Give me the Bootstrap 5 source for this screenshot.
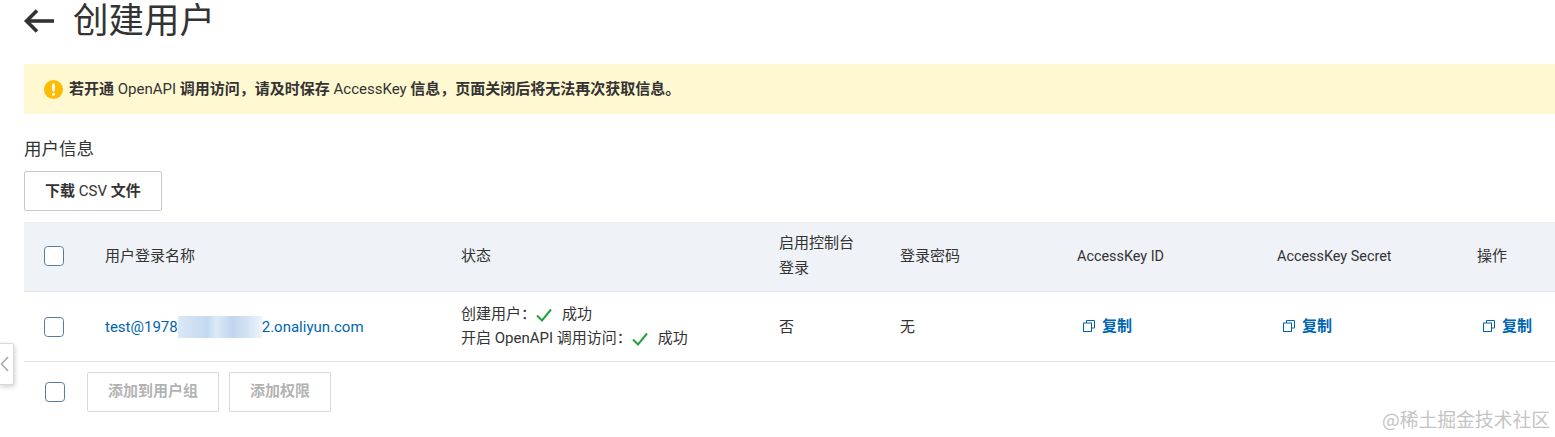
<!DOCTYPE html>
<html lang="zh-CN">
<head>
<meta charset="utf-8">
<title>创建用户</title>
<link href="https://cdn.jsdelivr.net/npm/bootstrap@5.3.0/dist/css/bootstrap.min.css" rel="stylesheet">
<style>
html,body{height:437px;overflow:hidden;background:#fff}
body{font-family:Roboto,"Noto Sans CJK SC",sans-serif;font-size:15px;color:#333;position:relative}
.pg{padding-left:24px}
.ttl-row{height:64px;padding-bottom:22px;gap:19px}
.ttl{font-size:35.5px;font-weight:400;line-height:40px;margin:0;color:#333}
.ttl-row svg{flex:none}
.warn{height:50px;background:#fff8d1;padding:1px 0 0 20px;gap:6px;font-weight:600;font-size:15px;color:#333}
.lat{font-weight:400}
.sect{font-size:17.5px;line-height:24px;margin:23px 0 10px;color:#333;font-weight:400}
.plain-btn{height:40px;border:1px solid #c6c9ce;border-radius:2px;background:#fff;font-size:15px;font-weight:600;color:#333;padding:0 20px;display:inline-flex;align-items:center;white-space:pre}
.plain-btn:hover{background:#fff;border-color:#c6c9ce}
.plain-btn.off,.plain-btn:disabled{color:#b3b3b3;border-color:#d9d9d9;opacity:1;background:#fff}
.tbl{table-layout:fixed;width:1531px;margin:11px 0 0;color:#333;font-size:15px}
.tbl th{background:#eff2f6;font-weight:400;height:69px;padding:0 16px 0 20px;vertical-align:middle;line-height:25px;border-bottom:1px solid #dfe2e6;color:#333}
.tbl td{height:70px;padding:1px 0 0 20px;vertical-align:middle;line-height:24px;border-bottom:1px solid #dfe2e6;color:#333}
.keyname{font-size:14.4px}
.box{width:20px;height:20px;margin:0;border:1px solid #5c7a9a;border-radius:3px;display:block;float:none}
.lnk{color:#0064b4;text-decoration:none}
.blurred{display:inline-block;width:84px;height:22px;vertical-align:-6px;background:linear-gradient(90deg,#dbe8f6 0,#c4d9f1 35%,#dce9f7 45%,#c0d6ef 65%,#d7e5f5 85%,#eef4fb 100%)}
.copy{color:#0064b4;font-weight:600;text-decoration:none;display:inline-flex;align-items:center;gap:7px;margin-left:6px}
.ok{margin:0 10px 0 0;vertical-align:-3px}
.states{margin-top:-2px}
.foot{padding-left:21px;margin-top:10px;gap:10px}
.foot .box{margin-right:12px}
.handle{position:absolute;left:-1px;top:343px;width:15px;height:42px;background:#fff;border:1px solid #d9d9d9;border-radius:0 2px 2px 0;box-shadow:1px 2px 5px rgba(0,0,0,.18);display:flex;align-items:center}
.mark-wm{position:absolute;right:5px;top:406px;font-size:18.8px;line-height:26px;color:#c4c4c4;font-family:"Noto Sans CJK SC",sans-serif}
</style>
</head>
<body>
<div class="pg">
  <div class="ttl-row d-flex align-items-center">
    <svg width="30" height="24" viewBox="0 0 30 24" fill="none" stroke="#333" stroke-width="3.6"><path d="M30 12H3"/><path d="M13 1.5 2.5 12 13 22.5"/></svg>
    <h1 class="ttl">创建用户</h1>
  </div>
  <div class="warn d-flex align-items-center">
    <svg width="19" height="19" viewBox="0 0 19 19"><circle cx="9.5" cy="9.5" r="9.5" fill="#fbbc05"/><rect x="8.2" y="3.5" width="2.6" height="8" rx="1" fill="#fff"/><circle cx="9.5" cy="14.3" r="1.5" fill="#fff"/></svg>
    <span>若开通 <span class="lat">OpenAPI</span> 调用访问，请及时保存 <span class="lat">AccessKey</span> 信息，页面关闭后将无法再次获取信息。</span>
  </div>
  <h2 class="sect">用户信息</h2>
  <button type="button" class="btn plain-btn">下载 <span class="lat">CSV</span> 文件</button>
  <table class="table tbl">
    <colgroup><col style="width:61px"><col style="width:356px"><col style="width:318px"><col style="width:121px"><col style="width:177px"><col style="width:200px"><col style="width:200px"><col style="width:98px"></colgroup>
    <thead>
      <tr>
        <th><input class="form-check-input box" type="checkbox" aria-label="全选"></th>
        <th>用户登录名称</th>
        <th>状态</th>
        <th>启用控制台登录</th>
        <th>登录密码</th>
        <th class="keyname">AccessKey ID</th>
        <th class="keyname">AccessKey Secret</th>
        <th>操作</th>
      </tr>
    </thead>
    <tbody>
      <tr>
        <td><input class="form-check-input box" type="checkbox" aria-label="选择"></td>
        <td><a class="lnk" href="#">test@1978<span class="blurred"></span>2.onaliyun.com</a></td>
        <td>
          <div class="states">
            <div>创建用户：<svg class="ok" width="16" height="14" viewBox="0 0 16 14" fill="none" stroke="#23a33b" stroke-width="2"><path d="M1 7.5 6 12.5 15 1.5"/></svg>成功</div>
            <div>开启 OpenAPI 调用访问：<svg class="ok" width="16" height="14" viewBox="0 0 16 14" fill="none" stroke="#23a33b" stroke-width="2"><path d="M1 7.5 6 12.5 15 1.5"/></svg>成功</div>
          </div>
        </td>
        <td>否</td>
        <td>无</td>
        <td><a class="copy" href="#"><svg width="12" height="12" viewBox="0 0 12 12" fill="none" stroke="#0064b4"><rect x="0.5" y="3" width="8" height="8.5"/><path d="M3.5 3V.5h8V8H8.5"/></svg>复制</a></td>
        <td><a class="copy" href="#"><svg width="12" height="12" viewBox="0 0 12 12" fill="none" stroke="#0064b4"><rect x="0.5" y="3" width="8" height="8.5"/><path d="M3.5 3V.5h8V8H8.5"/></svg>复制</a></td>
        <td><a class="copy" href="#"><svg width="12" height="12" viewBox="0 0 12 12" fill="none" stroke="#0064b4"><rect x="0.5" y="3" width="8" height="8.5"/><path d="M3.5 3V.5h8V8H8.5"/></svg>复制</a></td>
      </tr>
    </tbody>
  </table>
  <div class="foot d-flex align-items-center">
    <input class="form-check-input box" type="checkbox" aria-label="全选">
    <button type="button" class="btn plain-btn off" disabled>添加到用户组</button>
    <button type="button" class="btn plain-btn off" disabled>添加权限</button>
  </div>
</div>
<div class="handle"><svg width="10" height="20" viewBox="0 0 10 20" fill="none" stroke="#a9a9a9" stroke-width="1.6"><path d="M8 3 1.5 10 8 17"/></svg></div>
<div class="mark-wm">@稀土掘金技术社区</div>
<script src="https://cdn.jsdelivr.net/npm/bootstrap@5.3.0/dist/js/bootstrap.bundle.min.js"></script>
</body>
</html>
